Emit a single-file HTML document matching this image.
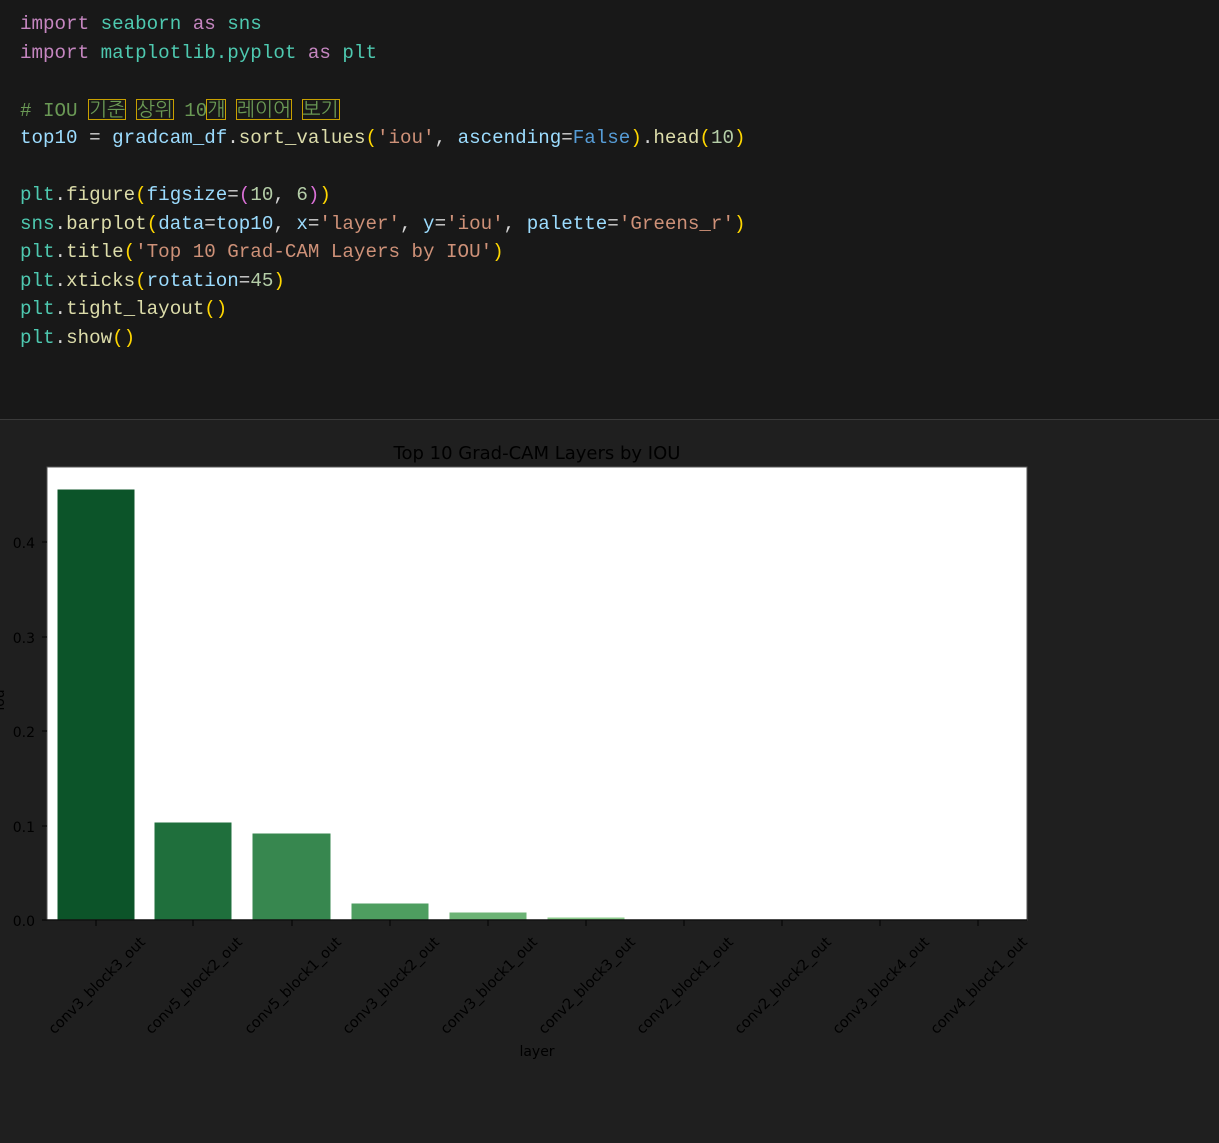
<!DOCTYPE html>
<html><head><meta charset="utf-8"><style>
html,body{margin:0;padding:0;width:1219px;height:1143px;background:#1f1f1f;overflow:hidden}
.code{position:absolute;left:0;top:0;width:1219px;height:419px;background:#181818;border-bottom:1px solid #3a3a3a}
.l{position:absolute;left:20px;font-family:"Liberation Mono","NanumGothic",monospace;font-size:19.2px;white-space:pre;line-height:24px;color:#d4d4d4}
.k{color:#c586c0}.m{color:#4ec9b0}.c{color:#6a9955}.v{color:#9cdcfe}.f{color:#dcdcaa}.s{color:#ce9178}.n{color:#b5cea8}.b{color:#569cd6}.y{color:#ffd700}.p{color:#da70d6}
.kr{outline:1px solid #c8a000;outline-offset:0px;font-family:"NanumGothic","Noto Sans CJK KR",sans-serif}
svg text{font-family:"DejaVu Sans",sans-serif;fill:#000}
</style></head><body>
<div class="code">
<div class="l" style="top:12px"><span class="k">import</span> <span class="m">seaborn</span> <span class="k">as</span> <span class="m">sns</span></div>
<div class="l" style="top:41px"><span class="k">import</span> <span class="m">matplotlib.pyplot</span> <span class="k">as</span> <span class="m">plt</span></div>
<div class="l c" style="top:98px"># IOU <span class="kr">기준</span> <span class="kr">상위</span> 10<span class="kr">개</span> <span class="kr">레이어</span> <span class="kr">보기</span></div>
<div class="l" style="top:126px"><span class="v">top10</span> = <span class="v">gradcam_df</span>.<span class="f">sort_values</span><span class="y">(</span><span class="s">'iou'</span>, <span class="v">ascending</span>=<span class="b">False</span><span class="y">)</span>.<span class="f">head</span><span class="y">(</span><span class="n">10</span><span class="y">)</span></div>
<div class="l" style="top:183px"><span class="m">plt</span>.<span class="f">figure</span><span class="y">(</span><span class="v">figsize</span>=<span class="p">(</span><span class="n">10</span>, <span class="n">6</span><span class="p">)</span><span class="y">)</span></div>
<div class="l" style="top:212px"><span class="m">sns</span>.<span class="f">barplot</span><span class="y">(</span><span class="v">data</span>=<span class="v">top10</span>, <span class="v">x</span>=<span class="s">'layer'</span>, <span class="v">y</span>=<span class="s">'iou'</span>, <span class="v">palette</span>=<span class="s">'Greens_r'</span><span class="y">)</span></div>
<div class="l" style="top:240px"><span class="m">plt</span>.<span class="f">title</span><span class="y">(</span><span class="s">'Top 10 Grad-CAM Layers by IOU'</span><span class="y">)</span></div>
<div class="l" style="top:269px"><span class="m">plt</span>.<span class="f">xticks</span><span class="y">(</span><span class="v">rotation</span>=<span class="n">45</span><span class="y">)</span></div>
<div class="l" style="top:297px"><span class="m">plt</span>.<span class="f">tight_layout</span><span class="y">()</span></div>
<div class="l" style="top:326px"><span class="m">plt</span>.<span class="f">show</span><span class="y">()</span></div>
</div>
<svg style="position:absolute;left:0;top:0" width="1219" height="1143">
<rect x="47" y="467" width="980" height="453" fill="#fff" stroke="#555" stroke-width="1"/>
<g stroke="#fff" stroke-width="1">
<rect x="57" y="489" width="78" height="431" fill="#0c5429"/>
<rect x="154" y="822" width="78" height="98" fill="#1f6f3c"/>
<rect x="252" y="833" width="79" height="87" fill="#37874f"/>
<rect x="351" y="903" width="78" height="17" fill="#4e9e60"/>
<rect x="449" y="912" width="78" height="8" fill="#6cb375"/>
<rect x="547" y="917" width="78" height="3" fill="#8ccb8c"/>
<rect x="645" y="919" width="78" height="1" fill="#abd9a7"/>
<rect x="742" y="919" width="79" height="1" fill="#c4e6bf"/>
</g>
<line x1="47" y1="920" x2="1027" y2="920" stroke="#111" stroke-width="1.5"/>
<g stroke="#000" stroke-width="1">
<line x1="42" y1="920" x2="47" y2="920"/><line x1="42" y1="826" x2="47" y2="826"/><line x1="42" y1="731" x2="47" y2="731"/><line x1="42" y1="637" x2="47" y2="637"/><line x1="42" y1="542" x2="47" y2="542"/>
<line x1="96" y1="920" x2="96" y2="926"/><line x1="193" y1="920" x2="193" y2="926"/><line x1="292" y1="920" x2="292" y2="926"/><line x1="390" y1="920" x2="390" y2="926"/><line x1="488" y1="920" x2="488" y2="926"/><line x1="586" y1="920" x2="586" y2="926"/><line x1="684" y1="920" x2="684" y2="926"/><line x1="782" y1="920" x2="782" y2="926"/><line x1="880" y1="920" x2="880" y2="926"/><line x1="978" y1="920" x2="978" y2="926"/>
</g>
<g font-size="14" text-anchor="end">
<text x="35" y="926">0.0</text><text x="35" y="832">0.1</text><text x="35" y="737">0.2</text><text x="35" y="643">0.3</text><text x="35" y="548">0.4</text>
</g>
<text x="537" y="459" font-size="18" text-anchor="middle">Top 10 Grad-CAM Layers by IOU</text>
<text x="537" y="1056" font-size="14" text-anchor="middle">layer</text>
<text transform="translate(4,700) rotate(-90)" font-size="14" text-anchor="middle">iou</text>
<g font-size="14.5" text-anchor="end">
<text transform="translate(146,943) rotate(-45)">conv3_block3_out</text>
<text transform="translate(243,943) rotate(-45)">conv5_block2_out</text>
<text transform="translate(342,943) rotate(-45)">conv5_block1_out</text>
<text transform="translate(440,943) rotate(-45)">conv3_block2_out</text>
<text transform="translate(538,943) rotate(-45)">conv3_block1_out</text>
<text transform="translate(636,943) rotate(-45)">conv2_block3_out</text>
<text transform="translate(734,943) rotate(-45)">conv2_block1_out</text>
<text transform="translate(832,943) rotate(-45)">conv2_block2_out</text>
<text transform="translate(930,943) rotate(-45)">conv3_block4_out</text>
<text transform="translate(1028,943) rotate(-45)">conv4_block1_out</text>
</g>
</svg>
</body></html>
